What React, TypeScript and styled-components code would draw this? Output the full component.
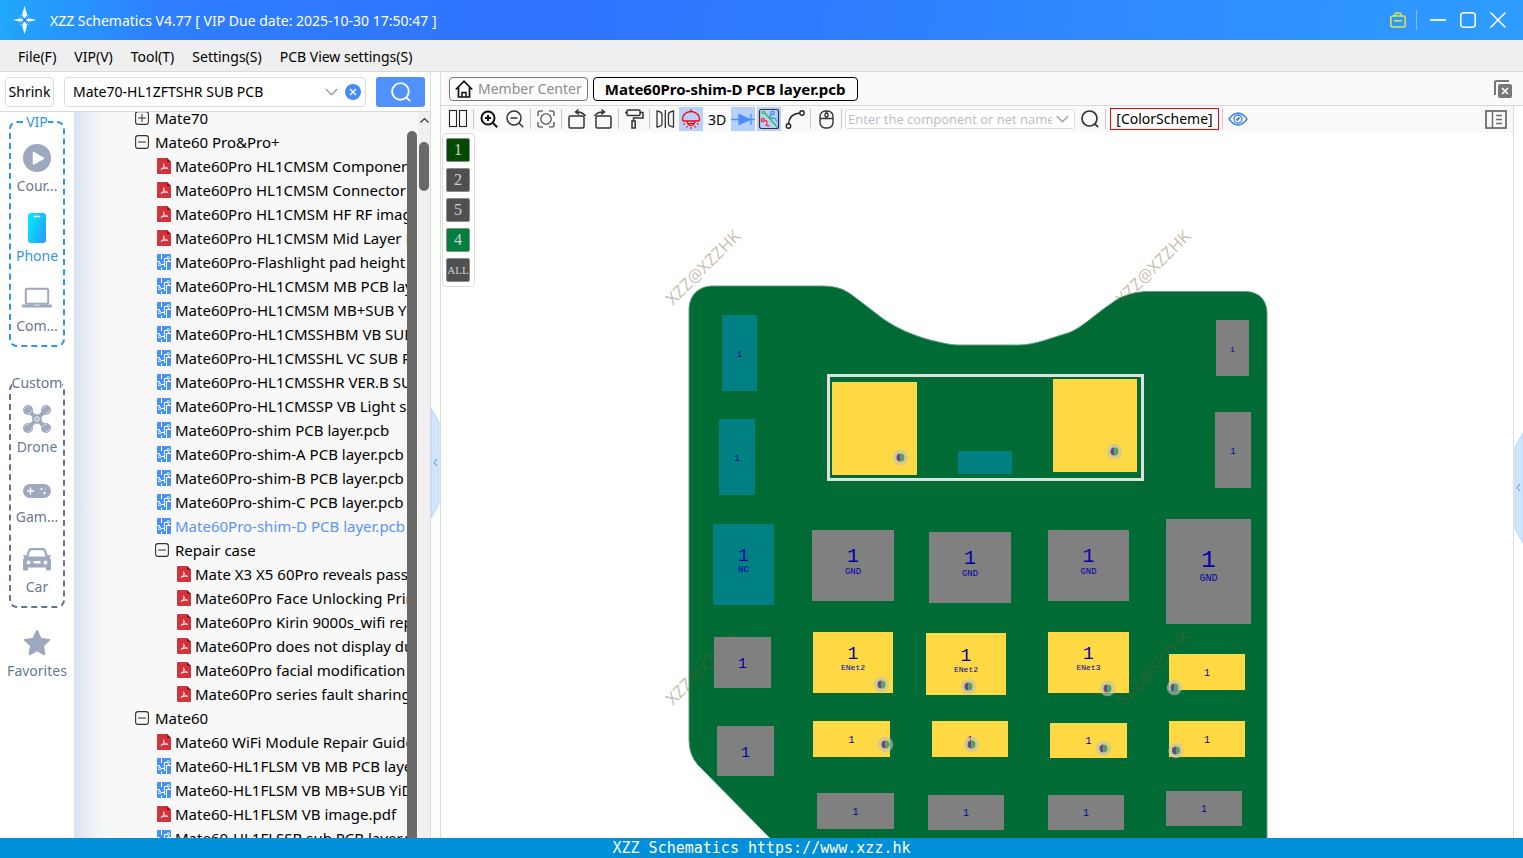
import React from "react";
import styled, { createGlobalStyle } from "styled-components";

const GlobalStyle = createGlobalStyle`
  *, *::before, *::after { box-sizing: border-box; }
  html, body { margin: 0; padding: 0; }
  body {
    font-family: "Noto Sans", "Open Sans", sans-serif;
    font-size: 14px;
    color: #000;
    background: #fff;
  }
  button, input { font: inherit; color: inherit; }
  button { padding: 0; border: 0; background: none; cursor: pointer; }
  ul { list-style: none; margin: 0; padding: 0; }
  svg { display: block; flex: none; }
`;

const Window = styled.div`
  display: flex;
  flex-direction: column;
  height: 100vh;
  overflow: hidden;
`;

/* ---------- title bar and menu ---------- */

const TitleBar = styled.header`
  display: flex;
  align-items: center;
  flex: none;
  height: 40px;
  padding: 0 16px 0 12px;
  color: #fff;
  background: linear-gradient(100deg, #20a8fa 0%, #2f7eff 11%, #2f74ff 35%, #2f80ff 60%, #2e9dff 100%);
`;

const AppTitle = styled.h1`
  flex: 1;
  margin: 0 0 0 12px;
  font-size: 14px;
  font-weight: 400;
  white-space: nowrap;
`;

const WindowControls = styled.div`
  display: flex;
  align-items: center;
  gap: 12px;
`;

const ControlDivider = styled.span`
  width: 1px;
  height: 20px;
  margin-left: -3px;
  background: #7fbcff;
`;

const ControlButton = styled.button`
  display: grid;
  place-items: center;
  width: 18px;
  height: 18px;
`;

const MenuBar = styled.nav`
  display: flex;
  align-items: center;
  flex: none;
  gap: 18px;
  height: 32px;
  padding: 1px 18px 0;
  background: #efefef;
  border-bottom: 1px solid #dadada;
`;

const MenuItem = styled.button`
  white-space: nowrap;
`;

/* ---------- left panel ---------- */

const Body = styled.div`
  display: flex;
  flex: 1;
  min-height: 0;
`;

const LeftPanel = styled.aside`
  display: flex;
  flex-direction: column;
  flex: none;
  width: 431px;
  border-right: 1px solid #dcdcdc;
`;

const SearchRow = styled.form`
  display: flex;
  align-items: center;
  flex: none;
  height: 40px;
  padding: 0 5px;
  border-bottom: 1px solid #dadada;
`;

const ShrinkButton = styled.button`
  width: 49px;
  height: 30px;
  margin-right: 10px;
  border: 1px solid #dcdcdc;
  border-radius: 4px;
  background: #fff;
`;

const SearchBox = styled.div`
  display: flex;
  align-items: center;
  flex: 1;
  gap: 2px;
  min-width: 0;
  height: 30px;
  padding: 0 2px 0 8px;
  border: 1px solid #dcdcdc;
  border-radius: 4px;
  background: #fff;
`;

const SearchInput = styled.input`
  flex: 1;
  min-width: 0;
  padding: 0;
  border: 0;
  outline: 0;
  background: none;
`;

const IconButton = styled.button`
  display: grid;
  place-items: center;
  width: 20px;
  height: 20px;
`;

const SearchButton = styled.button`
  display: grid;
  place-items: center;
  width: 49px;
  height: 30px;
  margin-left: 10px;
  border-radius: 3px;
  background: #4f92ff;
`;

const PanelBody = styled.div`
  display: flex;
  flex: 1;
  min-height: 0;
`;

const Sidebar = styled.nav`
  display: flex;
  flex-direction: column;
  align-items: center;
  flex: none;
  width: 74px;
  background: #fff;
`;

const Group = styled.fieldset<{ $tone: string; $after: number }>`
  display: flex;
  flex-direction: column;
  align-items: center;
  flex: none;
  gap: 14px;
  width: 56px;
  min-width: 0;
  margin: 0 0 ${(p) => p.$after}px;
  padding: 11px 0 6px;
  border: 2px dashed ${(p) => p.$tone};
  border-radius: 8px;

  > legend {
    padding: 0;
    margin: 0 auto;
    line-height: 20px;
    color: ${(p) => p.$tone};
  }
`;

const CategoryButton = styled.button<{ $active?: boolean }>`
  display: flex;
  flex-direction: column;
  align-items: center;
  height: 56px;
  color: ${(p) => (p.$active ? "#2f95ee" : "#6a7890")};
  line-height: 26px;
`;

const CategoryIcon = styled.span`
  display: grid;
  place-items: center;
  height: 30px;
`;

const TreePane = styled.div`
  display: flex;
  flex: 1;
  min-width: 0;
  overflow: hidden;
  background: linear-gradient(90deg, #d8e2f2 0, #eceff5 16px, #f8f8f8 34px);
`;

const Tree = styled.ul`
  flex: 1;
  min-width: 0;
  margin-top: -6px;
  overflow: hidden;
  font-size: 15px;
`;

const TreeRow = styled.li<{ $indent: number }>`
  display: flex;
  height: 24px;
  padding-left: ${(p) => p.$indent}px;
`;

const TreeButton = styled.button<{ $active?: boolean; $gap: number }>`
  display: flex;
  align-items: center;
  gap: ${(p) => p.$gap}px;
  height: 24px;
  white-space: nowrap;
  color: ${(p) => (p.$active ? "#5b93ff" : "#000")};
`;

const InnerBar = styled.div`
  flex: none;
  width: 11px;
  padding: 19px 1px 0 0;

  &::after {
    content: "";
    display: block;
    height: 100%;
    border-radius: 5px 5px 0 0;
    background: #696969;
  }
`;

const OuterBar = styled.div`
  display: flex;
  flex-direction: column;
  align-items: center;
  flex: none;
  width: 12px;
  padding-top: 4px;
  gap: 18px;
  background: #f0f0f0;
`;

const Thumb = styled.span`
  width: 10px;
  height: 49px;
  border-radius: 5px;
  background: #696969;
`;

/* ---------- gutters ---------- */

const Gutter = styled.div<{ $lift: number; $tint: string }>`
  display: flex;
  flex: none;
  align-items: center;
  width: 9px;
  padding-top: ${(p) => p.$lift}px;
  background: ${(p) => p.$tint};
`;

/* ---------- work area ---------- */

const Work = styled.main`
  display: flex;
  flex-direction: column;
  flex: 1;
  min-width: 0;
  border-left: 1px solid #dcdcdc;
`;

const TabBar = styled.div`
  display: flex;
  align-items: center;
  flex: none;
  gap: 5px;
  height: 34px;
  padding: 0 10px 0 8px;
  background: #fafafa;
  border-bottom: 1px solid #dadada;
`;

const Tab = styled.button<{ $active?: boolean }>`
  display: flex;
  align-items: center;
  gap: 5px;
  height: 24px;
  padding: 0 ${(p) => (p.$active ? 11 : 5)}px;
  border: 1px solid ${(p) => (p.$active ? "#000" : "#777")};
  border-radius: 4px;
  color: ${(p) => (p.$active ? "#000" : "#8c8c8c")};
  font-size: ${(p) => (p.$active ? 15 : 14)}px;
  font-weight: ${(p) => (p.$active ? 700 : 400)};
  line-height: 20px;
  background: #fcfcfc;
  white-space: nowrap;
`;

const Spacer = styled.span`
  flex: 1;
`;

const WorkBody = styled.div`
  display: flex;
  flex: 1;
  min-height: 0;
`;

const Viewer = styled.section`
  display: flex;
  flex-direction: column;
  flex: 1;
  min-width: 0;
  border-right: 1px solid #dcdcdc;
`;

const Toolbar = styled.div`
  display: flex;
  align-items: center;
  flex: none;
  gap: 2px;
  height: 26px;
  padding: 0 8px 0 5px;
  background: #fafafa;
`;

const Tool = styled.button<{ $on?: boolean }>`
  display: grid;
  place-items: center;
  width: 24px;
  height: 24px;
  background: ${(p) => (p.$on ? "#b7d1ff" : "none")};
`;

const Separator = styled.span`
  width: 1px;
  height: 20px;
  margin: 0 1px;
  background: #c8c8c8;
`;

const NetBox = styled.div`
  display: flex;
  align-items: center;
  width: 230px;
  height: 20px;
  margin-right: 1px;
  padding: 0 2px;
  border: 1px solid #dcdcdc;
  border-radius: 3px;
  background: #fff;
  font-family: "Open Sans", "Noto Sans", sans-serif;
  font-size: 13px;
`;

const NetInput = styled(SearchInput)`
  &::placeholder {
    color: #b9bdc4;
    opacity: 1;
  }
`;

const SchemeButton = styled.button`
  width: 109px;
  height: 22px;
  margin-left: 1px;
  border: 1px solid #f00;
  background: #fff;
  line-height: 20px;
`;

const Canvas = styled.div`
  position: relative;
  flex: 1;
  min-height: 0;
  overflow: hidden;
  background: #fff;

  > svg {
    width: 100%;
    height: 100%;
  }
`;

const LayerPanel = styled.div`
  position: absolute;
  top: 1px;
  left: 1px;
  display: flex;
  flex-direction: column;
  gap: 6px;
  padding: 4px 4px 4px 3px;
  border: 1px solid #dcdcdc;
  border-radius: 4px;
  background: #fff;
`;

const LayerButton = styled.button<{ $fill: string; $small?: boolean }>`
  width: 24px;
  height: 24px;
  border: 1px solid #8b8b8b;
  border-radius: 2px;
  background: ${(p) => p.$fill};
  color: #cfcfcf;
  font-family: "Liberation Serif", serif;
  font-size: ${(p) => (p.$small ? 11 : 16)}px;
  line-height: 16px;
`;

const StatusBar = styled.footer`
  flex: none;
  height: 20px;
  background: #0090da;
  color: #fff;
  font-family: "DejaVu Sans Mono", "Liberation Mono", monospace;
  font-size: 15px;
  line-height: 20px;
  text-align: center;
  white-space: nowrap;
`;

/* ---------- icons ---------- */

const GREY = "#9ea9bf";

const Logo = () => (
  <svg width="26" height="30" viewBox="0 0 26 30">
    <g fill="#fff">
      <path d="M12.6 1c.8 3.500 2.400 6.500 2.400 9.200l-2.400 3.300-2.400-3.300c0-2.700 1.600-5.700 2.400-9.200z" />
      <path d="M12.600 29c.8-3.500 2.400-6.500 2.400-9.200l-2.400-3.300-2.400 3.300c0 2.700 1.600 5.700 2.400 9.200z" />
      <path d="M1 15c3.200-.6 5.500-1.600 8-1.600l3 1.600-3 1.600c-2.500 0-4.800-1-8-1.600z" />
      <path d="M24.500 15c-3.200-.6-5.500-1.600-8-1.600l-3 1.600 3 1.600c2.500 0 4.800-1 8-1.600z" />
    </g>
    <g stroke="#9fd0ff" strokeWidth="1" strokeDasharray="2 1" fill="none">
      <path d="M8 10l3 3M17 10l-3 3M8 20l3-3M17 20l-3-3" />
      <circle cx="12.600" cy="15" r="6" opacity=".5" />
    </g>
    <circle cx="12.600" cy="15" r="1.500" fill="#2f86fd" />
  </svg>
);

const Toolbox = () => (
  <svg width="16" height="16" viewBox="0 0 16 16" fill="none" stroke="#e6e44a" strokeWidth="1.500">
    <path d="M5 4V2.500Q5 1 6.500 1h3Q11 1 11 2.500V4" />
    <rect x=".8" y="4" width="14.400" height="11" rx="2" />
    <path d="M4 8.800h8" />
  </svg>
);

const Minimize = () => (
  <svg width="16" height="16" viewBox="0 0 16 16">
    <path d="M0 8h16" stroke="#fff" strokeWidth="1.700" />
  </svg>
);

const Maximize = () => (
  <svg width="16" height="16" viewBox="0 0 16 16">
    <rect x=".8" y=".8" width="14.400" height="14.400" rx="3" fill="none" stroke="#fff" strokeWidth="1.500" />
  </svg>
);

const Close = () => (
  <svg width="16" height="16" viewBox="0 0 16 16">
    <path d="M.5.5l15 15M15.500.5l-15 15" stroke="#fff" strokeWidth="1.500" />
  </svg>
);

const Chevron = ({ up }: { up?: boolean }) => (
  <svg width="13" height="8" viewBox="0 0 13 8" fill="none">
    {up ? (
      <path d="M2.500 6.500l4-4 4 4" stroke="#333" strokeWidth="1.200" />
    ) : (
      <path d="M.8 1l5.700 5.700L12.200 1" stroke="#9a9ea6" strokeWidth="1.400" />
    )}
  </svg>
);

const Clear = () => (
  <svg width="16" height="16" viewBox="0 0 16 16">
    <circle cx="8" cy="8" r="8" fill="#458df0" />
    <path d="M5 5l6 6M11 5l-6 6" stroke="#fff" strokeWidth="1.400" />
  </svg>
);

const Lens = ({ color, size = 18 }: { color: string; size?: number }) => (
  <svg width={size} height={size} viewBox="0 0 18 18" fill="none" stroke={color} strokeWidth="1.700">
    <circle cx="8.500" cy="8.500" r="7.500" />
    <path d="M13.800 13.800l3.400 3.400" />
  </svg>
);

const Play = () => (
  <svg width="28" height="28" viewBox="0 0 28 28">
    <circle cx="14" cy="14" r="14" fill={GREY} />
    <path d="M10.500 8.500v11.500l10-5.700z" fill="#fff" stroke="#fff" strokeWidth="1.500" strokeLinejoin="round" />
  </svg>
);

const Phone = () => (
  <svg width="18" height="30" viewBox="0 0 18 30">
    <defs>
      <linearGradient id="phone" x1="0" y1=".2" x2="1" y2=".8">
        <stop offset="0" stopColor="#00eaff" />
        <stop offset="1" stopColor="#2a9dff" />
      </linearGradient>
    </defs>
    <rect width="18" height="30" rx="3" fill="url(#phone)" />
    <path d="M6.500 3.500h5" stroke="#fff" strokeWidth="1.500" strokeLinecap="round" />
  </svg>
);

const Laptop = () => (
  <svg width="30" height="22" viewBox="0 0 30 22">
    <rect x="3.800" y="1.800" width="22.400" height="15" rx="1.500" fill="none" stroke={GREY} strokeWidth="2" />
    <path d="M0 17.500h11.500l1 1h5l1-1H30v1.500q0 1.500-1.500 1.500h-27Q0 20.500 0 19z" fill={GREY} />
  </svg>
);

const Drone = () => (
  <svg width="28" height="28" viewBox="1 1 28 28">
    <path d="M6 6l9 9 9-9M6 24l9-9 9 9" fill="none" stroke={GREY} strokeWidth="4" />
    {[[6, 6], [24, 6], [6, 24], [24, 24]].map(([x, y]) => (
      <g key={`${x}-${y}`}>
        <circle cx={x} cy={y} r="5" fill={GREY} />
        <circle cx={x} cy={y} r="3.700" fill="none" stroke="#dfe4ee" strokeWidth=".7" strokeDasharray="6 6" />
      </g>
    ))}
    <circle cx="15" cy="15" r="4.800" fill={GREY} />
    <circle cx="15" cy="15" r="2.200" fill="none" stroke="#fff" strokeWidth="1" />
  </svg>
);

const Gamepad = () => (
  <svg width="28" height="18" viewBox="0 -4 28 18">
    <rect width="28" height="14" rx="7" fill={GREY} />
    <path d="M7.500 3.500v7M4 7h7" stroke="#fff" strokeWidth="1.500" />
    <g fill="#fff">
      <circle cx="18.500" cy="5" r="1.100" />
      <circle cx="21.500" cy="9" r="1.200" />
      <circle cx="22" cy="5" r=".5" />
    </g>
  </svg>
);

const Car = () => (
  <svg width="28" height="24" viewBox="0 0 28 24">
    <path
      fill={GREY}
      fillRule="evenodd"
      d="M8 1h12q2 0 2.800 2l2 5.500 2.700-.8q.8 1.500-1 2.600Q28 11.500 28 14v8q0 1.500-1.500 1.500h-2Q23 23.500 23 22v-1.500H5V22q0 1.500-1.500 1.500h-2Q0 23.500 0 22v-8q0-2.500 1.500-3.700-1.800-1.100-1-2.600l2.700.8 2-5.500Q6 1 8 1zm.3 2.200Q7.500 3.200 7.200 4L5.300 9.500h17.400L20.800 4q-.3-.8-1.100-.8zM5.500 13.500a2 2 0 100 4 2 2 0 000-4zm17 0a2 2 0 100 4 2 2 0 000-4zM10.500 14v2.500h7V14z"
    />
  </svg>
);

const Star = () => (
  <svg width="28" height="28" viewBox="0 0 28 28">
    <path
      d="M14 2l3.700 7.700 8.500 1.200-6.200 5.900 1.500 8.500-7.500-4.100-7.500 4.100 1.500-8.500-6.200-5.900 8.500-1.200z"
      fill={GREY}
      stroke={GREY}
      strokeWidth="2"
      strokeLinejoin="round"
    />
  </svg>
);

const Toggle = ({ open }: { open: boolean }) => (
  <svg width="14" height="14" viewBox="0 0 14 14" fill="none" stroke="#333">
    <rect x=".6" y=".6" width="12.800" height="12.800" rx="2.500" strokeWidth="1.100" />
    <path d={open ? "M3 7h8" : "M3 7h8M7 3v8"} strokeWidth="1" />
  </svg>
);

const PdfIcon = () => (
  <svg width="14" height="16" viewBox="0 0 14 16">
    <path d="M1 0h9l4 4v11q0 1-1 1H1q-1 0-1-1V1q0-1 1-1z" fill="#d3333c" />
    <path d="M10 0l4 4h-4z" fill="#8d0f16" />
    <path d="M6.500 5.500c1 1.500.8 4.200-2.700 6M7 8.300c.6 1 1.700 1.600 3.700 2M4.500 11c2-.8 3.500-1 6-.8" fill="none" stroke="#fff" strokeWidth="1" />
  </svg>
);

const PcbIcon = () => (
  <svg width="14" height="16" viewBox="0 0 14 16">
    <rect width="14" height="16" rx="1" fill="#4690fb" />
    <g fill="none" stroke="#fff" strokeWidth="1">
      <path d="M4.500 0v5M0 7.500h2.500v1.500M7.500 4.500V13M4 10.500h3.500M9.500 16V7.500H14M10 4.500H7.500M11.500 5.500v2M4.500 16v-2.500" />
      <circle cx="11.300" cy="4" r="1.300" />
      <circle cx="2.700" cy="10.500" r="1.300" />
    </g>
  </svg>
);

const Home = () => (
  <svg width="18" height="20" viewBox="0 0 18 20" fill="none" stroke="#111" strokeWidth="1.700">
    <path d="M.8 10.500L9 2.200l8.200 8.300M3.500 8.500V18h11V8.500" />
    <path d="M7 18v-4.500h4V18" strokeWidth="1.500" />
  </svg>
);

const CloseAll = () => (
  <svg width="18" height="18" viewBox="0 0 18 18">
    <path d="M1 15V2.500Q1 1 2.500 1H15" fill="none" stroke="#777" strokeWidth="2" />
    <rect x="4" y="4" width="14" height="14" rx="2" fill="#777" />
    <path d="M8 8l6 6M14 8l-6 6" stroke="#fff" strokeWidth="1.600" />
  </svg>
);

const SidePanel = () => (
  <svg width="22" height="19" viewBox="0 0 22 19" fill="none" stroke="#6e6e6e">
    <rect x="1" y="1" width="20" height="17" strokeWidth="1.800" />
    <path d="M7.500 1v17" strokeWidth="1.500" />
    <path d="M11 5.500h6M11 9.500h6M11 13.500h6" strokeWidth="1.300" />
  </svg>
);

const Stroke = ({ children, color = "#333", width = 1.5 }: { children: React.ReactNode; color?: string; width?: number }) => (
  <svg width="24" height="24" viewBox="0 0 24 24" fill="none" stroke={color} strokeWidth={width}>
    {children}
  </svg>
);

const SplitIcon = () => (
  <Stroke color="#222" width={1.1}>
    <rect x="3.500" y="3.500" width="7" height="16" />
    <rect x="13.500" y="3.500" width="7" height="16" />
  </Stroke>
);

const ZoomIcon = ({ plus }: { plus?: boolean }) => (
  <Stroke color={plus ? "#111" : "#333"} width={plus ? 2 : 1.5}>
    <circle cx="11" cy="11" r={plus ? 6.5 : 7} />
    <path d="M16 16l4.200 4.200" />
    <path d={plus ? "M8 11h6M11 8v6" : "M7.500 11h7"} />
  </Stroke>
);

const FitIcon = () => (
  <Stroke width={1.1}>
    <circle cx="12" cy="12" r="5.200" />
    <path d="M4 9V5.500Q4 4 5.500 4H9M15 4h3.500Q20 4 20 5.500V9M20 15v3.500q0 1.500-1.500 1.500H15M9 20H5.500Q4 20 4 18.500V15" />
  </Stroke>
);

const RotateLeft = () => (
  <Stroke>
    <rect x="4" y="9" width="15" height="12" rx="1.500" />
    <path d="M11 5q6-.8 9.500 4M13.500 2.500L10.500 5l3.500 2.500" />
  </Stroke>
);

const RotateRight = () => (
  <Stroke>
    <rect x="5" y="9" width="15" height="12" rx="1.500" />
    <path d="M13 5q-6-.8-9.500 4M10.500 2.500l3 2.500-3.500 2.500" />
  </Stroke>
);

const RollerIcon = () => (
  <Stroke>
    <rect x="5" y="3" width="13" height="5.500" rx="1" />
    <path d="M18 5.500h3v5.500h-9.500v3M3 5.500h2" />
    <rect x="10" y="14" width="3.200" height="7" />
  </Stroke>
);

const MirrorIcon = () => (
  <Stroke width={1.3}>
    <path d="M4 4v16q5-1 5-3V7q0-2-5-3zM20.500 4v16q-5-1-5-3V7q0-2 5-3zM12.300 3v18" />
  </Stroke>
);

const LampIcon = () => (
  <Stroke color="#f00" width={1.4}>
    <path d="M3.500 12.500a8.500 8 0 0117 0q0 1.500-1.500 1.500H5q-1.500 0-1.500-1.500zM12 2.500v2" />
    <path d="M8 14.500q1 4 4 4t4-4M9.500 16.500h5M4.500 17.500l1.500-1M19.500 17.500l-1.500-1M7.500 20.500l1-1.500M16.500 20.500l-1-1.500M12 22v-2" strokeWidth="1.200" />
  </Stroke>
);

const DiodeIcon = () => (
  <Stroke color="#4a8dff" width={1.3}>
    <path d="M0 12.500h24M20 7v11" />
    <path d="M8 7.500v10l11-5z" fill="#4a8dff" />
  </Stroke>
);

const RouteIcon = () => (
  <Stroke color="#333" width={1.2}>
    <rect x="2.500" y="2.500" width="19" height="19" rx="2" />
    <path d="M8 6l12 14" stroke="#2fc24c" strokeWidth="1.500" />
    <path d="M14.500 7.500q-2.500 1.500-1 3t3 .5q2.500 0 3 3.500" stroke="#3c8cf0" />
    <circle cx="15.500" cy="6" r="1.700" stroke="#3c8cf0" />
    <path d="M7 14q2.500-1 3 1t-1 3q2 1.500 3.500.5" stroke="#f22" />
    <circle cx="5.800" cy="13" r="1.600" stroke="#f22" />
    <circle cx="6.500" cy="5.500" r="1.200" stroke="#2fc24c" />
  </Stroke>
);

const CurveIcon = () => (
  <Stroke color="#222" width={1.4}>
    <circle cx="5.500" cy="19" r="2.200" />
    <circle cx="19" cy="6" r="2.200" />
    <path d="M5.500 16.500Q6.500 7 16.700 6" />
  </Stroke>
);

const MouseIcon = () => (
  <Stroke color="#333" width={1.4}>
    <rect x="6" y="4" width="13" height="17" rx="5.500" />
    <path d="M6 11.500h13M12.500 4v2M12.500 9.500v2" />
    <rect x="11" y="6" width="3" height="4" rx="1.500" />
  </Stroke>
);

const EyeIcon = () => (
  <Stroke color="#3a7be0" width={1.3}>
    <path d="M3 12q9-12 18 0-9 12-18 0z" />
    <circle cx="12" cy="12" r="4" />
    <path d="M10.500 13.500l3-3" strokeWidth="1.800" />
  </Stroke>
);

const Handle = ({ side }: { side: "left" | "right" }) => (
  <svg width="9" height="110" viewBox="0 0 9 110">
    <path
      d={side === "left" ? "M0 0l8 14v82l-8 14z" : "M9 0L1 14v82l8 14z"}
      fill="#cfe6fd"
      stroke="#b4d6f8"
      strokeWidth="1"
    />
    <path d="M6 51L3 54.500 6 58" fill="none" stroke="#4a8fd8" />
  </svg>
);

/* ---------- data ---------- */

type Kind = "closed" | "open" | "pdf" | "pcb";
type Node = { kind: Kind; level: number; name: string; active?: boolean };

const nodes: Node[] = [
  { kind: "closed", level: 0, name: "Mate70" },
  { kind: "open", level: 0, name: "Mate60 Pro&Pro+" },
  { kind: "pdf", level: 1, name: "Mate60Pro HL1CMSM Component.pdf" },
  { kind: "pdf", level: 1, name: "Mate60Pro HL1CMSM Connector definition.pdf" },
  { kind: "pdf", level: 1, name: "Mate60Pro HL1CMSM HF RF image.pdf" },
  { kind: "pdf", level: 1, name: "Mate60Pro HL1CMSM Mid Layer Diode.pdf" },
  { kind: "pcb", level: 1, name: "Mate60Pro-Flashlight pad height pcb" },
  { kind: "pcb", level: 1, name: "Mate60Pro-HL1CMSM MB PCB layer.pcb" },
  { kind: "pcb", level: 1, name: "Mate60Pro-HL1CMSM MB+SUB YiDian.pcb" },
  { kind: "pcb", level: 1, name: "Mate60Pro-HL1CMSSHBM VB SUB.pcb" },
  { kind: "pcb", level: 1, name: "Mate60Pro-HL1CMSSHL VC SUB PCB.pcb" },
  { kind: "pcb", level: 1, name: "Mate60Pro-HL1CMSSHR VER.B SUB.pcb" },
  { kind: "pcb", level: 1, name: "Mate60Pro-HL1CMSSP VB Light sensor.pcb" },
  { kind: "pcb", level: 1, name: "Mate60Pro-shim PCB layer.pcb" },
  { kind: "pcb", level: 1, name: "Mate60Pro-shim-A PCB layer.pcb" },
  { kind: "pcb", level: 1, name: "Mate60Pro-shim-B PCB layer.pcb" },
  { kind: "pcb", level: 1, name: "Mate60Pro-shim-C PCB layer.pcb" },
  { kind: "pcb", level: 1, name: "Mate60Pro-shim-D PCB layer.pcb", active: true },
  { kind: "open", level: 1, name: "Repair case" },
  { kind: "pdf", level: 2, name: "Mate X3 X5 60Pro reveals password.pdf" },
  { kind: "pdf", level: 2, name: "Mate60Pro Face Unlocking Principle.pdf" },
  { kind: "pdf", level: 2, name: "Mate60Pro Kirin 9000s_wifi repair.pdf" },
  { kind: "pdf", level: 2, name: "Mate60Pro does not display due.pdf" },
  { kind: "pdf", level: 2, name: "Mate60Pro facial modification case.pdf" },
  { kind: "pdf", level: 2, name: "Mate60Pro series fault sharing.pdf" },
  { kind: "open", level: 0, name: "Mate60" },
  { kind: "pdf", level: 1, name: "Mate60 WiFi Module Repair Guide.pdf" },
  { kind: "pcb", level: 1, name: "Mate60-HL1FLSM VB MB PCB layer.pcb" },
  { kind: "pcb", level: 1, name: "Mate60-HL1FLSM VB MB+SUB YiDian.pcb" },
  { kind: "pdf", level: 1, name: "Mate60-HL1FLSM VB image.pdf" },
  { kind: "pcb", level: 1, name: "Mate60-HL1FLSSB sub PCB layer.pcb" },
];

const TEAL = "#008083";
const ASH = "#808080";
const GOLD = "#ffd943";

type Pad = {
  box: [number, number, number, number];
  fill: string;
  pin?: number;
  pinY?: number;
  net?: string;
  netY?: number;
  netSize?: number;
};

const pads: Pad[] = [
  { box: [722, 315, 35, 76], fill: TEAL, pin: 9, pinY: 357 },
  { box: [719, 419, 36, 76], fill: TEAL, pin: 9, pinY: 461 },
  { box: [832, 382, 85, 93], fill: GOLD },
  { box: [958, 451, 54, 23], fill: TEAL },
  { box: [1053, 379, 84, 93], fill: GOLD },
  { box: [1216, 320, 33, 56], fill: ASH, pin: 8, pinY: 352 },
  { box: [1215, 412, 36, 76], fill: ASH, pin: 9, pinY: 454 },
  { box: [713, 524, 61, 81], fill: TEAL, pin: 18, pinY: 561, net: "NC", netY: 572, netSize: 9 },
  { box: [812, 530, 82, 71], fill: ASH, pin: 20, pinY: 562, net: "GND", netY: 574, netSize: 9 },
  { box: [929, 532, 82, 71], fill: ASH, pin: 20, pinY: 564, net: "GND", netY: 576, netSize: 9 },
  { box: [1048, 530, 81, 71], fill: ASH, pin: 20, pinY: 562, net: "GND", netY: 574, netSize: 9 },
  { box: [1166, 519, 85, 105], fill: ASH, pin: 24, pinY: 567, net: "GND", netY: 581, netSize: 10 },
  { box: [714, 637, 57, 51], fill: ASH, pin: 15, pinY: 668 },
  { box: [813, 632, 80, 61], fill: GOLD, pin: 18, pinY: 659, net: "ENet2", netY: 670, netSize: 8 },
  { box: [926, 633, 80, 62], fill: GOLD, pin: 18, pinY: 661, net: "ENet2", netY: 672, netSize: 8 },
  { box: [1048, 632, 81, 61], fill: GOLD, pin: 18, pinY: 659, net: "ENet3", netY: 670, netSize: 8 },
  { box: [1169, 654, 76, 36], fill: GOLD, pin: 10, pinY: 676 },
  { box: [717, 726, 57, 50], fill: ASH, pin: 15, pinY: 757 },
  { box: [813, 721, 77, 36], fill: GOLD, pin: 10, pinY: 743 },
  { box: [932, 721, 76, 36], fill: GOLD, pin: 10, pinY: 743 },
  { box: [1050, 723, 77, 35], fill: GOLD, pin: 10, pinY: 744 },
  { box: [1169, 721, 76, 36], fill: GOLD, pin: 10, pinY: 743 },
  { box: [817, 793, 77, 36], fill: ASH, pin: 10, pinY: 815 },
  { box: [928, 795, 76, 35], fill: ASH, pin: 10, pinY: 816 },
  { box: [1048, 795, 76, 35], fill: ASH, pin: 10, pinY: 816 },
  { box: [1166, 791, 76, 35], fill: ASH, pin: 10, pinY: 812 },
];

const vias = [
  [900.5, 457.5], [1114.5, 451.5], [881.5, 684.5], [968.5, 686.5], [1107.5, 688.5],
  [1174.5, 687.5], [885.5, 744.5], [971.5, 744.5], [1103.5, 748.5], [1176, 750.5],
];

const marks = [[673, 306], [1123, 306], [673, 706], [1123, 706]];

const Board = () => (
  <svg viewBox="441 132 1072 706" role="img" aria-label="PCB layer">
    <path
      fill="#006b35"
      stroke="#5f9f7c"
      strokeWidth="1"
      d="M689 310C689 296 698 286 713 286H822C838 286 846 290 856 298L882 318C896 328 912 335 930 340C943 343 950 345 960 345H1019C1035 345 1050 338 1068 333C1082 328 1095 314 1112 303C1120 296 1135 291.500 1148 291.500H1246C1260 292 1267 301 1267 313V840H772Q768 836 764 832L698 765Q689 755 689 740Z"
    />
    <rect x="828.500" y="375.500" width="314" height="104" fill="none" stroke="#e0e0e0" strokeWidth="3" />
    <g fill="#6e5a30" fillOpacity=".38" fontFamily='"Noto Sans", sans-serif' fontSize="17">
      {marks.map(([x, y]) => (
        <text key={`${x}-${y}`} transform={`translate(${x} ${y}) rotate(-45)`}>
          XZZ@XZZHK
        </text>
      ))}
    </g>
    <g fontFamily='"Liberation Mono", monospace' textAnchor="middle">
      {pads.map(({ box: [x, y, w, h], fill, pin, pinY, net, netY, netSize }) => (
        <g key={`${x}-${y}`}>
          <rect x={x} y={y} width={w} height={h} fill={fill} />
          {pin && (
            <text x={x + w / 2} y={pinY} fontSize={pin} fill="#0000a8">
              1
            </text>
          )}
          {net && (
            <text x={x + w / 2} y={netY} fontSize={netSize} fill="#0000a8">
              {net}
            </text>
          )}
        </g>
      ))}
    </g>
    {vias.map(([x, y]) => (
      <g key={`${x}-${y}`}>
        <circle cx={x} cy={y} r="7.700" fill="#c0c0b8" fillOpacity=".62" />
        <path d={`M${x} ${y - 4}a4 4 0 000 8z`} fill="#5a4f8c" />
        <path d={`M${x} ${y - 4}a4 4 0 010 8z`} fill="#58a260" />
      </g>
    ))}
  </svg>
);

const icons: Record<Kind, React.ReactNode> = {
  closed: <Toggle open={false} />,
  open: <Toggle open />,
  pdf: <PdfIcon />,
  pcb: <PcbIcon />,
};

const Category = ({ icon, label, active }: { icon: React.ReactNode; label: string; active?: boolean }) => (
  <CategoryButton type="button" $active={active}>
    <CategoryIcon>{icon}</CategoryIcon>
    {label}
  </CategoryButton>
);

export default function App() {
  return (
    <Window>
      <GlobalStyle />
      <TitleBar>
        <Logo />
        <AppTitle>XZZ Schematics V4.77 [ VIP Due date: 2025-10-30 17:50:47 ]</AppTitle>
        <WindowControls>
          <ControlButton aria-label="Toolbox"><Toolbox /></ControlButton>
          <ControlDivider />
          <ControlButton aria-label="Minimize"><Minimize /></ControlButton>
          <ControlButton aria-label="Maximize"><Maximize /></ControlButton>
          <ControlButton aria-label="Close"><Close /></ControlButton>
        </WindowControls>
      </TitleBar>
      <MenuBar>
        {["File(F)", "VIP(V)", "Tool(T)", "Settings(S)", "PCB View settings(S)"].map((m) => (
          <MenuItem key={m}>{m}</MenuItem>
        ))}
      </MenuBar>
      <Body>
        <LeftPanel>
          <SearchRow onSubmit={(e) => e.preventDefault()}>
            <ShrinkButton type="button">Shrink</ShrinkButton>
            <SearchBox>
              <SearchInput aria-label="Search files" defaultValue="Mate70-HL1ZFTSHR SUB PCB" />
              <IconButton type="button" aria-label="History"><Chevron /></IconButton>
              <IconButton type="button" aria-label="Clear"><Clear /></IconButton>
            </SearchBox>
            <SearchButton aria-label="Search"><Lens color="#fff" size={20} /></SearchButton>
          </SearchRow>
          <PanelBody>
            <Sidebar>
              <Group $tone="#2f95ee" $after={26}>
                <legend>VIP</legend>
                <Category icon={<Play />} label="Cour..." />
                <Category icon={<Phone />} label="Phone" active />
                <Category icon={<Laptop />} label="Com..." />
              </Group>
              <Group $tone="#66748c" $after={20}>
                <legend>Custom</legend>
                <Category icon={<Drone />} label="Drone" />
                <Category icon={<Gamepad />} label="Gam..." />
                <Category icon={<Car />} label="Car" />
              </Group>
              <Category icon={<Star />} label="Favorites" />
            </Sidebar>
            <TreePane>
              <Tree>
                {nodes.map((n) => {
                  const folder = n.kind === "open" || n.kind === "closed";
                  return (
                    <TreeRow key={n.name} $indent={(folder ? 61 : 63) + n.level * 20}>
                      <TreeButton type="button" $active={n.active} $gap={folder ? 6 : 4}>
                        {icons[n.kind]}
                        {n.name}
                      </TreeButton>
                    </TreeRow>
                  );
                })}
              </Tree>
              <InnerBar />
              <OuterBar>
                <Chevron up />
                <Thumb />
              </OuterBar>
            </TreePane>
          </PanelBody>
        </LeftPanel>
        <Gutter $lift={16} $tint="#fafffa"><Handle side="left" /></Gutter>
        <Work>
          <TabBar>
            <Tab><Home />Member Center</Tab>
            <Tab $active>Mate60Pro-shim-D PCB layer.pcb</Tab>
            <Spacer />
            <IconButton aria-label="Close all tabs"><CloseAll /></IconButton>
          </TabBar>
          <WorkBody>
            <Viewer>
              <Toolbar>
                <Tool aria-label="Split view"><SplitIcon /></Tool>
                <Separator />
                <Tool aria-label="Zoom in"><ZoomIcon plus /></Tool>
                <Tool aria-label="Zoom out"><ZoomIcon /></Tool>
                <Separator />
                <Tool aria-label="Fit"><FitIcon /></Tool>
                <Separator />
                <Tool aria-label="Rotate left"><RotateLeft /></Tool>
                <Tool aria-label="Rotate right"><RotateRight /></Tool>
                <Separator />
                <Tool aria-label="Paint"><RollerIcon /></Tool>
                <Separator />
                <Tool aria-label="Mirror"><MirrorIcon /></Tool>
                <Tool aria-label="Highlight" $on><LampIcon /></Tool>
                <Tool>3D</Tool>
                <Tool aria-label="Diode values" $on><DiodeIcon /></Tool>
                <Tool aria-label="Nets" $on><RouteIcon /></Tool>
                <Tool aria-label="Curve"><CurveIcon /></Tool>
                <Separator />
                <Tool aria-label="Mouse"><MouseIcon /></Tool>
                <Separator />
                <NetBox>
                  <NetInput aria-label="Component or net name" placeholder="Enter the component or net name to search" />
                  <IconButton aria-label="Recent names"><Chevron /></IconButton>
                </NetBox>
                <Tool aria-label="Find"><Lens color="#333" /></Tool>
                <Separator />
                <SchemeButton>[ColorScheme]</SchemeButton>
                <Separator />
                <Tool aria-label="Visibility"><EyeIcon /></Tool>
                <Spacer />
                <IconButton aria-label="Side panel"><SidePanel /></IconButton>
              </Toolbar>
              <Canvas>
                <Board />
                <LayerPanel>
                  <LayerButton $fill="#004b00">1</LayerButton>
                  <LayerButton $fill="#505050">2</LayerButton>
                  <LayerButton $fill="#505050">5</LayerButton>
                  <LayerButton $fill="#00803f">4</LayerButton>
                  <LayerButton $fill="#505050" $small>ALL</LayerButton>
                </LayerPanel>
              </Canvas>
            </Viewer>
            <Gutter $lift={32} $tint="#fff"><Handle side="right" /></Gutter>
          </WorkBody>
        </Work>
      </Body>
      <StatusBar>XZZ Schematics https://www.xzz.hk</StatusBar>
    </Window>
  );
}
